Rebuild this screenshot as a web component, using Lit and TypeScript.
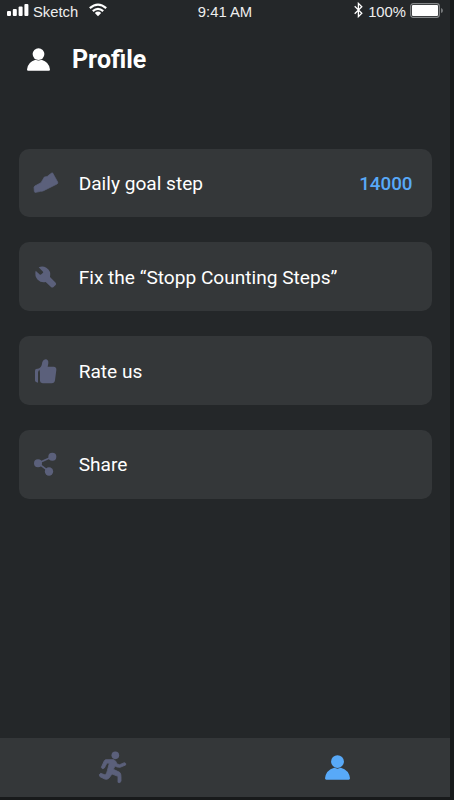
import { LitElement, html, css, svg } from "lit";
import { customElement, property } from "lit/decorators.js";

const person = svg`<circle cx="38" cy="20" r="19.5"/><path d="M0 71Q3 46 28 39Q38 44 48 39Q73 46 76 71Q76 75 72 75H4Q0 75 0 71Z"/>`;

const icons: Record<string, unknown> = {
  shoe: svg`<path d="M6 55Q7 50 14 48L27 41L37 24Q47 24 51 18L59 12Q60 10 62 12L77 39Q79 43 75 45L35 65Q31 67 26 67L12 70Q7 71 7 67Z" stroke="currentColor" stroke-width="2"/>`,
  wrench: svg`<path d="M20 13Q32 8 43 14Q58 23 54 42L71 59Q74 63 71 66L64 73Q60 75 57 72L41 57Q27 60 17 50Q7 38 11 23L24 35Q26 36 28 34L33 29Q34 27 33 26Z"/>`,
  thumb: svg`<path d="M22 38Q18 42 18 47V77Q9 76 9 70V41Q9 35 15 35H18Q29 33 31 15Q34 7 41 7Q50 8 49 19L47 29H65Q74 30 73 39L69 70Q68 79 59 79H32Q24 78 24 72V48Q24 42 22 38Z"/>`,
  share: svg`<path d="M51 64L18 39.5L61 20.5" fill="none" stroke="currentColor" stroke-width="5"/><circle cx="18" cy="39.5" r="12"/><circle cx="61" cy="20.5" r="12"/><circle cx="51" cy="64.5" r="12.5"/>`,
};

@customElement("settings-row")
export class SettingsRow extends LitElement {
  @property() icon = "";
  @property() label = "";
  @property() value = "";

  static styles = css`
    :host {
      display: flex;
      align-items: center;
      box-sizing: border-box;
      height: 68.6px;
      padding: 0 19px 0 13px;
      border-radius: 10px;
      background: #343739;
      color: #fff;
      font-size: 19.1px;
      line-height: 24px;
    }
    svg {
      width: 28px;
      height: 28px;
      margin-right: 19px;
      color: #5b607b;
      fill: currentColor;
    }
    span {
      padding-top: 2.1px;
    }
    .label {
      flex: 1;
      white-space: nowrap;
    }
    .value {
      color: #58a9f8;
      font-size: 18.8px;
      font-weight: 500;
    }
  `;

  render() {
    return html`
      <svg viewBox="0 0 84 84">${icons[this.icon]}</svg>
      <span class="label">${this.label}</span>
      <span class="value">${this.value}</span>
    `;
  }
}

@customElement("app-root")
export class AppRoot extends LitElement {
  static styles = css`
    :host {
      display: block;
      width: 454px;
      height: 800px;
      overflow: hidden;
      background: #181a1b;
      font-family: Roboto, sans-serif;
    }
    .screen {
      display: flex;
      flex-direction: column;
      width: 450px;
      height: 797px;
      background: #242729;
      color: #fff;
    }
    .status {
      display: grid;
      grid-template-columns: 1fr auto 1fr;
      align-items: center;
      height: 23px;
      padding: 0 7px 0 7px;
      font: 14.8px/22px "Liberation Sans", sans-serif;
      color: #eee;
    }
    .left,
    .right {
      display: flex;
      align-items: center;
    }
    .right {
      justify-content: flex-end;
    }
    .signal { width: 22px; height: 14px; margin: -3px 4px 0 0; }
    .wifi { width: 18px; height: 14px; margin: -3px 0 0 11px; }
    .bluetooth { width: 9px; height: 16px; margin: -3px 5px 0 0; }
    .battery { width: 33px; height: 15px; margin: -3px 0 0 4px; }
    header {
      display: flex;
      align-items: center;
      height: 72px;
      padding-left: 27px;
    }
    header svg {
      width: 23px;
      height: 23px;
      fill: #fff;
    }
    h1 {
      margin: 1px 0 0 22px;
      font-size: 25px;
      line-height: 30px;
      font-weight: 700;
    }
    .list {
      display: flex;
      flex-direction: column;
      flex: 1;
      gap: 25.2px;
      padding: 53.7px 18.5px 0 18.7px;
    }
    nav {
      display: grid;
      grid-template-columns: 1fr 1fr;
      place-items: center;
      height: 59.5px;
      background: #343739;
    }
    .runner { width: 30px; height: 34px; margin-top: 2px; fill: #5b607b; color: #5b607b; }
    .profile { width: 25px; height: 25px; fill: #58a9f8; }
  `;

  render() {
    return html`
      <div class="screen">
        <div class="status">
          <div class="left">
            <svg class="signal" viewBox="0 0 22 14" fill="#fff">
              <rect y="8" width="4" height="5" rx="1" /><rect x="5.8" y="6" width="4" height="7" rx="1" />
              <rect x="11.6" y="3.5" width="4" height="9.5" rx="1" /><rect x="17.4" y="1" width="4" height="12" rx="1" />
            </svg>
            <span>Sketch</span>
            <svg class="wifi" viewBox="0 0 18 14" fill="none" stroke="#fff" stroke-width="2.2">
              <path d="M.8 5.2Q9-1.8 17.2 5.2M3.8 8.2Q9 3.7 14.2 8.2" />
              <path d="M5.8 10Q9 7.2 12.2 10L9 13.2Z" fill="#fff" stroke="none" />
            </svg>
          </div>
          <span>9:41 AM</span>
          <div class="right">
            <svg class="bluetooth" viewBox="0 0 9 16" fill="none" stroke="#fff" stroke-width="1.3">
              <path d="M.7 4.2L7.8 11.2L4.4 14.6V1.4L7.8 4.8L.7 11.8" />
            </svg>
            <span>100%</span>
            <svg class="battery" viewBox="0 0 33 15">
              <rect x=".7" y=".7" width="28.6" height="13.6" rx="2.5" fill="none" stroke="#85888a" stroke-width="1.2" />
              <rect x="2" y="2" width="26" height="11" rx="1" fill="#fff" />
              <path d="M31 5Q33 5.5 33 7.5T31 10Z" fill="#777a7c" />
            </svg>
          </div>
        </div>
        <header>
          <svg viewBox="0 0 76 76">${person}</svg>
          <h1>Profile</h1>
        </header>
        <main class="list">
          <settings-row icon="shoe" label="Daily goal step" value="14000"></settings-row>
          <settings-row icon="wrench" label="Fix the “Stopp Counting Steps”"></settings-row>
          <settings-row icon="thumb" label="Rate us"></settings-row>
          <settings-row icon="share" label="Share"></settings-row>
        </main>
        <nav>
          <svg class="runner" viewBox="0 0 90 102">
            <circle cx="52" cy="13" r="11.5" />
            <path stroke="currentColor" stroke-width="2.5" stroke-linejoin="round" d="M24 26H47Q54 28 57 39L65 41L79 35Q85 36 83 42L66 49Q56 49 51 45L46 55L65 64Q69 68 69 76V90Q67 98 60 94V76L42 69L33 81Q28 87 20 84L6 77Q1 70 8 67L22 72Q27 66 28 59L34 37L27 36L19 51Q12 56 10 49L19 29Q21 26 24 26Z" />
          </svg>
          <svg class="profile" viewBox="0 0 76 76">${person}</svg>
        </nav>
      </div>
    `;
  }
}
